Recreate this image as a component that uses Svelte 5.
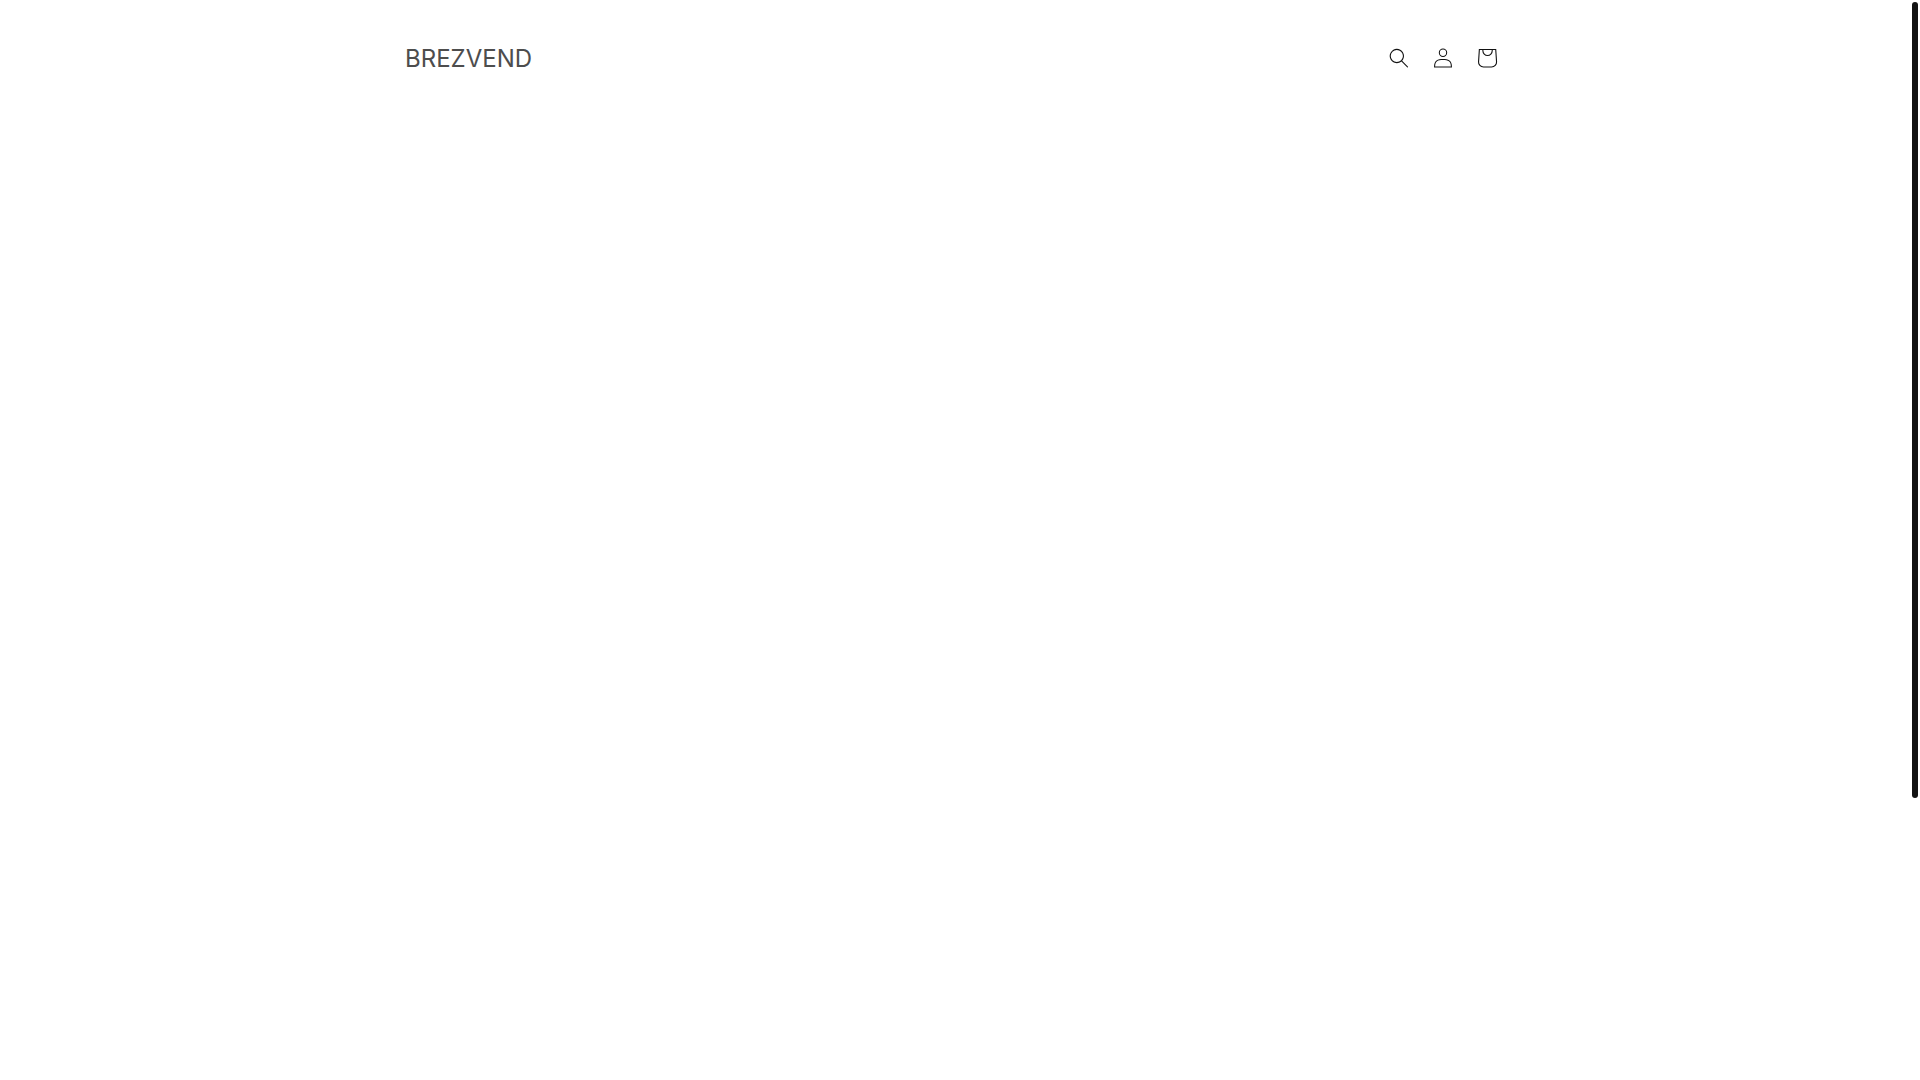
<script lang="ts">
	const brand = 'BREZVEND';
</script>

<header class="header">
	<h1 class="heading">
		<a href="/" class="logo">{brand}</a>
	</h1>

	<div class="icons">
		<button class="icon" type="button" aria-label="Search">
			<svg viewBox="0 0 18 19" aria-hidden="true">
				<path
					fill-rule="evenodd"
					clip-rule="evenodd"
					d="M11.03 11.68A5.784 5.784 0 112.85 3.5a5.784 5.784 0 018.18 8.18zm.26 1.12a6.78 6.78 0 11.72-.7l5.4 5.4a.5.5 0 11-.71.7l-5.41-5.4z"
				/>
			</svg>
		</button>
		<a class="icon" href="/account/login" aria-label="Log in">
			<svg viewBox="0 0 18 19" aria-hidden="true">
				<path
					fill-rule="evenodd"
					clip-rule="evenodd"
					d="M6 4.5a3 3 0 116 0 3 3 0 01-6 0zm3-4a4 4 0 100 8 4 4 0 000-8zm5.58 12.15c1.12.82 1.83 2.24 1.91 4.85H1.51c.08-2.6.79-4.03 1.9-4.85C4.66 11.75 6.5 11.5 9 11.5s4.35.26 5.58 1.15zM9 10.5c-2.5 0-4.65.24-6.17 1.35C1.27 12.98.5 14.93.5 18v.5h17V18c0-3.07-.77-5.02-2.33-6.15-1.52-1.1-3.67-1.35-6.17-1.35z"
				/>
			</svg>
		</a>
		<a class="icon" href="/cart" aria-label="Cart">
			<svg class="cart" viewBox="0 0 40 40" aria-hidden="true">
				<path
					fill-rule="evenodd"
					d="M15.75 11.8h-3.16l-.77 11.6a5 5 0 0 0 4.99 5.34h7.38a5 5 0 0 0 4.99-5.33l-.78-11.61zm0 1h-2.22l-.71 10.67a4 4 0 0 0 3.99 4.27h7.38a4 4 0 0 0 4-4.27l-.72-10.67h-2.22v.63a4.75 4.75 0 1 1 -9.5 0zm8.5 0h-7.5v.63a3.75 3.75 0 1 0 7.5 0z"
				/>
			</svg>
		</a>
	</div>
</header>

<!-- Scroll indicator, floats over the page -->
<div class="rail" aria-hidden="true">
	<div class="thumb"></div>
</div>

<style>
	:global(body) {
		background: #fff;
		font-family: Inter, 'Liberation Sans', sans-serif;
	}

	.header {
		display: flex;
		align-items: center;
		justify-content: space-between;
		box-sizing: border-box;
		max-width: 1200px;
		margin: 0 auto;
		padding: 36px 51px 36px 45px;
	}

	.heading {
		margin: 0;
		font-size: 24px;
		font-weight: 400;
		line-height: 37px;
	}

	.logo {
		color: #4d4d4d;
		text-decoration: none;
	}

	.logo:hover {
		color: #121212;
	}

	.icons {
		display: flex;
	}

	.icon {
		display: flex;
		align-items: center;
		justify-content: center;
		width: 44px;
		height: 44px;
		padding: 0;
		border: none;
		background: none;
		color: #121212;
		cursor: pointer;
	}

	.icon svg {
		width: 20px;
		height: 20px;
		fill: currentColor;
	}

	.icon .cart {
		width: 44px;
		height: 44px;
	}

	.rail {
		position: fixed;
		top: 2px;
		right: 2px;
		bottom: 2px;
		width: 6px;
	}

	.thumb {
		height: 74%;
		border-radius: 3px;
		background: #121212;
	}
</style>
